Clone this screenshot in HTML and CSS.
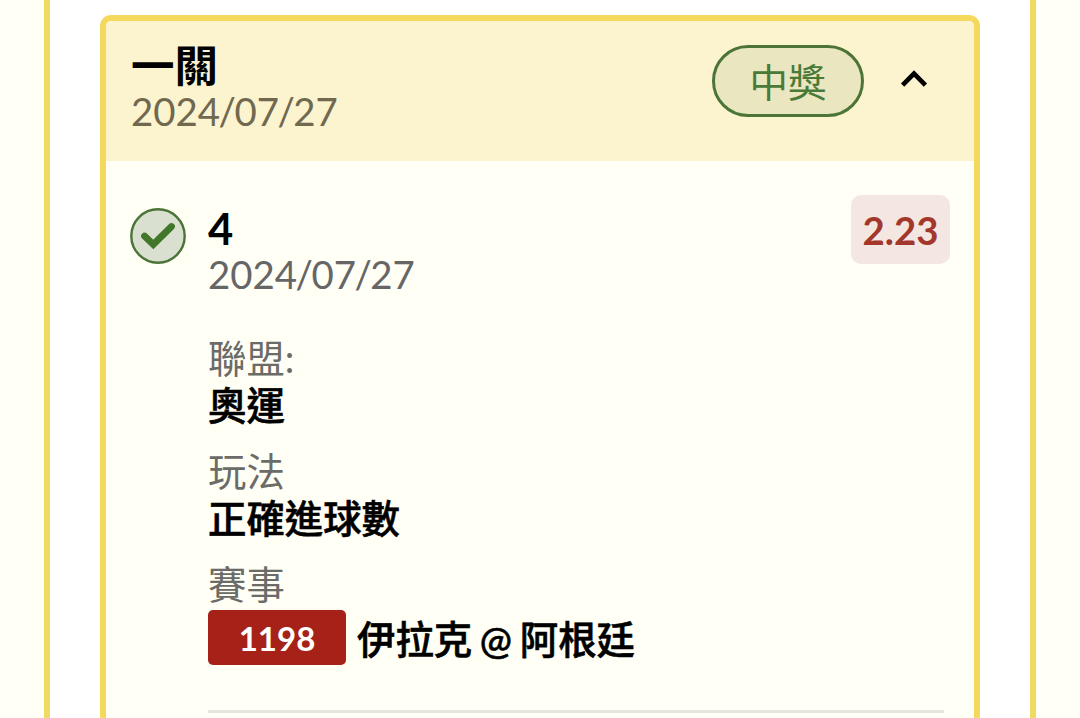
FILE: index.html
```
<!DOCTYPE html>
<html lang="zh-Hant">
<head>
    <meta charset="UTF-8">
    <title>一關</title>
    <link rel="stylesheet" href="styles.css">
</head>
<body>
    <div class="panel">
        <div class="card">
            <div class="card-header">
                <div class="card-heading">
                    <h2 class="title">一關</h2>
                    <div class="date">2024<span class="slash">/</span>07<span class="slash">/</span>27</div>
                </div>
                <span class="status">中獎</span>
                <svg class="chevron" viewBox="0 0 28 20" width="28" height="20">
                    <path d="M2.6 16.2 L14 4.6 L25.4 16.2" fill="none" stroke="#000" stroke-width="4.6"/>
                </svg>
            </div>
            <div class="card-body">
                <svg class="check" viewBox="0 0 56 56" width="56" height="56">
                    <circle cx="28" cy="28" r="26.7" fill="#d9e0d0" stroke="#4a7437" stroke-width="2.4"/>
                    <path d="M14.5 28 L23.3 36.5 L41.5 18.5" fill="none" stroke="#41762b" stroke-width="6.8" stroke-linecap="round"/>
                </svg>
                <div class="bet">
                    <div class="bet-top">
                        <div>
                            <h3 class="number">4</h3>
                            <div class="date">2024<span class="slash">/</span>07<span class="slash">/</span>27</div>
                        </div>
                        <span class="odds">2.23</span>
                    </div>
                    <div class="field">
                        <div class="label">聯盟:</div>
                        <div class="value">奧運</div>
                    </div>
                    <div class="field">
                        <div class="label">玩法</div>
                        <div class="value">正確進球數</div>
                    </div>
                    <div class="field">
                        <div class="label">賽事</div>
                        <div class="match">
                            <span class="code">1198</span>
                            <span class="value teams">伊拉克 @ 阿根廷</span>
                        </div>
                    </div>
                    <div class="divider"></div>
                </div>
            </div>
        </div>
    </div>
</body>
</html>
```
FILE: styles.css
```
* {
    box-sizing: border-box;
}
body {
    font-family: Lato, "Noto Sans CJK TC", sans-serif;
    font-size: 38.4px;
    line-height: 47px;
    margin: 0;
    height: 718px;
    overflow: hidden;
    background-color: #fffff6;
    color: #000;
}
h2, h3 {
    margin: 0;
}
.panel {
    height: 718px;
    margin: 0 44px;
    padding: 15px 50px 0;
    background: white;
    border-left: 6px solid #f1da61;
    border-right: 6px solid #f1da61;
}
/* the card carries on below the window, only its bottom edge is open */
.card {
    height: 703px;
    width: 880px;
    background: #fffff6;
    border: 6px solid #f4d95d;
    border-bottom: 0;
    border-radius: 11px 11px 0 0;
}
.card-header {
    display: flex;
    align-items: flex-start;
    height: 140px;
    padding: 24px 46px 0 25px;
    background: #fcf3cf;
    border-radius: 5px 5px 0 0;
}
.card-heading {
    flex: 1;
    margin-top: -2px;
}
.title, .number {
    font-size: 43.5px;
    line-height: 45px;
    font-weight: 700;
}
.date {
    color: #666;
}
.card-header .date {
    color: #706950;
}
.slash {
    margin: 0 -1.5px;
}
.status {
    width: 152px;
    height: 72px;
    line-height: 68px;
    text-align: center;
    color: #4a7a38;
    background: #e9e6c0;
    border: 3px solid #4c7437;
    border-radius: 36px;
}
.chevron {
    margin: 24px 0 0 36px;
}
.card-body {
    display: flex;
    padding: 34px 24px 0 24px;
}
.check {
    margin-top: 13px;
}
.bet {
    flex: 1;
    margin-left: 22px;
}
.bet-top {
    display: flex;
    justify-content: space-between;
    align-items: flex-start;
    margin-bottom: 37px;
}
.number {
    margin-top: 11px;
}
.odds {
    width: 99px;
    height: 69px;
    line-height: 71px;
    text-align: center;
    font-weight: 700;
    color: #a3372b;
    background: #f4e7e1;
    border-radius: 10px;
}
.field {
    margin-bottom: 19px;
}
.label {
    color: #6b6b67;
}
.value {
    font-weight: 500;
    -webkit-text-stroke: 0.6px #000;
}
.match {
    display: flex;
    align-items: center;
    gap: 11px;
    margin-top: 2px;
}
.teams {
    padding-top: 3px;
    word-spacing: -2px;
}
.code {
    width: 138px;
    height: 55px;
    line-height: 57px;
    text-align: center;
    font-size: 33px;
    font-weight: 700;
    color: white;
    background: #a62117;
    border-radius: 5px;
}
.divider {
    height: 3px;
    margin: 45px 6px 0 0;
    background: #e5e5dc;
}
```
